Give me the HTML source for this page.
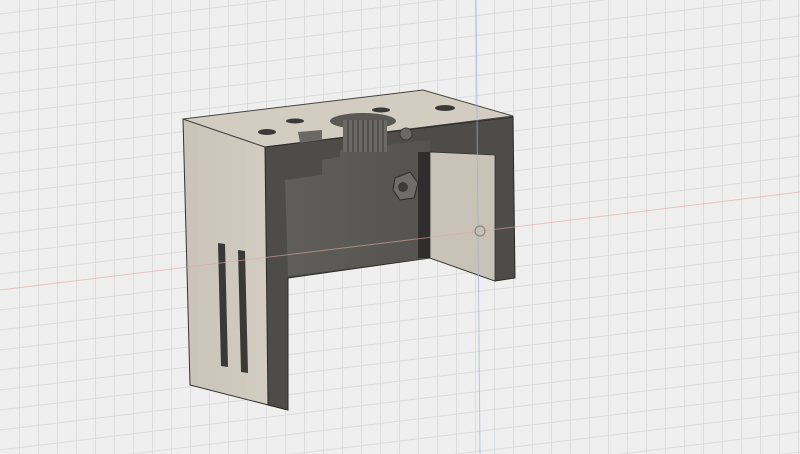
<!DOCTYPE html>
<html><head><meta charset="utf-8"><style>
html,body{margin:0;padding:0;background:#efefef;overflow:hidden;width:800px;height:454px}
svg{display:block;position:absolute;left:0;top:0}
</style></head><body>
<svg width="800" height="454" viewBox="0 0 800 454" xmlns="http://www.w3.org/2000/svg">
<defs>
<pattern id="g" width="19" height="454" patternUnits="userSpaceOnUse">
<rect x="0" y="0" width="1" height="454" fill="#dcdcdc"/>
</pattern>
<linearGradient id="lf" x1="0" y1="0" x2="1" y2="0">
<stop offset="0" stop-color="#c9c3b8"/><stop offset="1" stop-color="#d4cec3"/></linearGradient>
<linearGradient id="cv" x1="0" y1="0" x2="1" y2="0">
<stop offset="0" stop-color="#5f5e5b"/><stop offset="1" stop-color="#545350"/></linearGradient>
</defs>
<rect width="800" height="454" fill="#efefef"/>
<rect x="3" y="0" width="800" height="454" fill="url(#g)"/>
<g stroke="#dcdcdc" stroke-width="1">
<line x1="0" y1="14" x2="800" y2="-84"/>
<line x1="0" y1="34" x2="800" y2="-64"/>
<line x1="0" y1="54" x2="800" y2="-44"/>
<line x1="0" y1="74" x2="800" y2="-24"/>
<line x1="0" y1="94" x2="800" y2="-4"/>
<line x1="0" y1="114" x2="800" y2="16"/>
<line x1="0" y1="134" x2="800" y2="36"/>
<line x1="0" y1="154" x2="800" y2="56"/>
<line x1="0" y1="174" x2="800" y2="76"/>
<line x1="0" y1="194" x2="800" y2="96"/>
<line x1="0" y1="214" x2="800" y2="116"/>
<line x1="0" y1="234" x2="800" y2="136"/>
<line x1="0" y1="254" x2="800" y2="156"/>
<line x1="0" y1="274" x2="800" y2="176"/>
<line x1="0" y1="310" x2="800" y2="212"/>
<line x1="0" y1="330" x2="800" y2="232"/>
<line x1="0" y1="350" x2="800" y2="252"/>
<line x1="0" y1="370" x2="800" y2="272"/>
<line x1="0" y1="390" x2="800" y2="292"/>
<line x1="0" y1="410" x2="800" y2="312"/>
<line x1="0" y1="430" x2="800" y2="332"/>
<line x1="0" y1="450" x2="800" y2="352"/>
<line x1="0" y1="470" x2="800" y2="372"/>
<line x1="0" y1="490" x2="800" y2="392"/>
<line x1="0" y1="510" x2="800" y2="412"/>
<line x1="0" y1="530" x2="800" y2="432"/>
<line x1="0" y1="550" x2="800" y2="452"/>
</g>
<polygon points="183,119 265,147 288,410 190,385" fill="url(#lf)" stroke="#333" stroke-width="1"/>
<polygon points="183,119 423,90 513,116 265,147" fill="#d3cdc1" stroke="#444" stroke-width="1"/>
<polygon points="265,147 513,117 515,278 495,281 430,258 288,278 288,410 268,405" fill="#4d4c49" stroke="#2a2a2a" stroke-width="1"/>
<polygon points="285,180 322,175 322,160 340,157 340,150 430,140 430,258 288,276" fill="url(#cv)"/>
<polygon points="430,152 495,155 495,281 430,258" fill="#c8c2b7" stroke="#333" stroke-width="0.8"/>
<rect x="418" y="152" width="12" height="106" fill="#2e2d2b"/>
<ellipse cx="363" cy="121" rx="33" ry="8" fill="#5a5956"/>
<rect x="343" y="120" width="44" height="32" fill="#6a6966"/>
<g stroke="#3a3937" stroke-width="1">
<line x1="348" y1="120" x2="348" y2="152"/><line x1="353" y1="120" x2="353" y2="152"/>
<line x1="358" y1="120" x2="358" y2="152"/><line x1="363" y1="120" x2="363" y2="152"/>
<line x1="368" y1="120" x2="368" y2="152"/><line x1="373" y1="120" x2="373" y2="152"/>
<line x1="378" y1="120" x2="378" y2="152"/><line x1="383" y1="120" x2="383" y2="152"/>
</g>
<polygon points="298,132 322,130 322,140 300,143" fill="#6a6966"/>
<ellipse cx="267" cy="132" rx="9" ry="3" fill="#3b3a38"/>
<ellipse cx="295" cy="121" rx="9" ry="2.5" fill="#3b3a38"/>
<ellipse cx="381" cy="110" rx="9" ry="2.5" fill="#3b3a38"/>
<ellipse cx="445" cy="108" rx="10" ry="3" fill="#3b3a38"/>
<circle cx="406" cy="134" r="6" fill="#6a6966" stroke="#3a3937"/>
<polygon points="395,178 410,172 418,183 414,198 400,200 393,190" fill="#6e6d6a" stroke="#2c2c2c"/>
<circle cx="403" cy="187" r="5" fill="#3d3c3a"/>
<polygon points="218,243 225,244 228,367 221,366" fill="#3a3937"/>
<polygon points="238,250 245,251 248,373 241,372" fill="#3a3937"/>
<line x1="0" y1="290" x2="800" y2="192" stroke="#e0a8a0" stroke-width="1" opacity="0.6"/>
<line x1="476" y1="0" x2="480" y2="454" stroke="#9fb0e0" stroke-width="1" opacity="0.7"/>
<circle cx="480" cy="231" r="5" fill="none" stroke="#888" stroke-width="1.2"/>
</svg>
</body></html>
